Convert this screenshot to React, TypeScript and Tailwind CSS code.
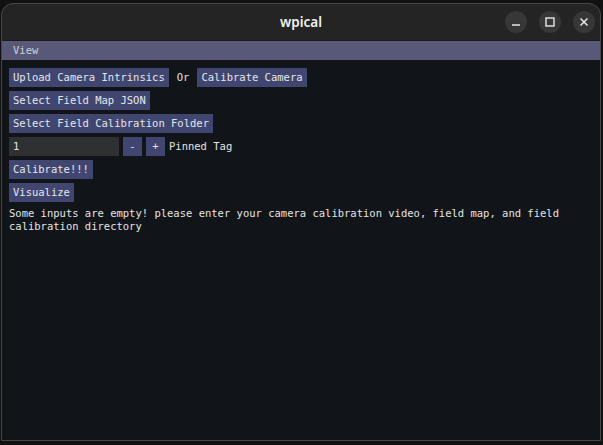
import React from 'react';

const mono = { fontFamily: '"DejaVu Sans Mono", "Liberation Mono", monospace' };

function Btn({ label }: { label: string }) {
  return (
    <div className="h-[19px] px-[4px] flex items-center bg-[#404670] text-[#e6e6ea] whitespace-pre">
      {label}
    </div>
  );
}

function WinButton({ children }: { children: React.ReactNode }) {
  return (
    <div className="w-[22px] h-[22px] rounded-full bg-[#373737] flex items-center justify-center">
      {children}
    </div>
  );
}

export default function App() {
  return (
    <div className="w-[603px] h-[445px] bg-[#111111] pt-[3px] pl-px pr-[2px] pb-[4px] overflow-hidden">
      <div className="h-full flex flex-col rounded-t-[12px] border border-[#474747] bg-[#242424] overflow-hidden">
        {/* title bar */}
        <div className="relative h-[37px] shrink-0 flex items-center justify-center border-b border-[#1b1b1b]">
          <span
            className="text-[13.5px] font-semibold text-[#f0f0f0]"
            style={{ fontFamily: '"Noto Sans", "Open Sans", sans-serif' }}
          >
            wpical
          </span>
          <div className="absolute right-[5px] top-[7px] flex gap-[12px]">
            <WinButton>
              <svg width="10" height="10" viewBox="0 0 10 10">
                <line x1="1" y1="8" x2="9" y2="8" stroke="#e8e8e8" strokeWidth="1.5" />
              </svg>
            </WinButton>
            <WinButton>
              <svg width="10" height="10" viewBox="0 0 10 10">
                <rect x="1" y="1" width="8" height="8" fill="none" stroke="#e8e8e8" strokeWidth="1.4" />
              </svg>
            </WinButton>
            <WinButton>
              <svg width="10" height="10" viewBox="0 0 10 10">
                <path d="M1.5 1.5 L8.5 8.5 M8.5 1.5 L1.5 8.5" stroke="#e8e8e8" strokeWidth="1.5" />
              </svg>
            </WinButton>
          </div>
        </div>

        {/* menu bar */}
        <div
          className="h-[19px] shrink-0 bg-[#585978] flex items-center px-[11px] text-[10.5px] text-[#cfd0dc]"
          style={mono}
        >
          View
        </div>

        {/* content */}
        <div
          className="flex-1 bg-[#111418] px-[7px] pt-[8px] flex flex-col gap-[4px] text-[10.5px] text-[#e4e4e4]"
          style={mono}
        >
          <div className="flex items-center gap-[8px]">
            <Btn label="Upload Camera Intrinsics" />
            <span>Or</span>
            <Btn label="Calibrate Camera" />
          </div>
          <div className="flex">
            <Btn label="Select Field Map JSON" />
          </div>
          <div className="flex">
            <Btn label="Select Field Calibration Folder" />
          </div>
          <div className="flex items-center gap-[4px]">
            <div className="w-[110px] h-[19px] bg-[#2e3032] px-[4px] flex items-center">1</div>
            <div className="w-[19px] h-[19px] bg-[#404670] flex items-center justify-center">-</div>
            <div className="w-[19px] h-[19px] bg-[#404670] flex items-center justify-center">+</div>
            <span>Pinned Tag</span>
          </div>
          <div className="flex">
            <Btn label="Calibrate!!!" />
          </div>
          <div className="flex">
            <Btn label="Visualize" />
          </div>
          <p className="leading-[13px] mt-[1px]">
            Some inputs are empty! please enter your camera calibration video, field map, and field calibration directory
          </p>
        </div>
      </div>
    </div>
  );
}
